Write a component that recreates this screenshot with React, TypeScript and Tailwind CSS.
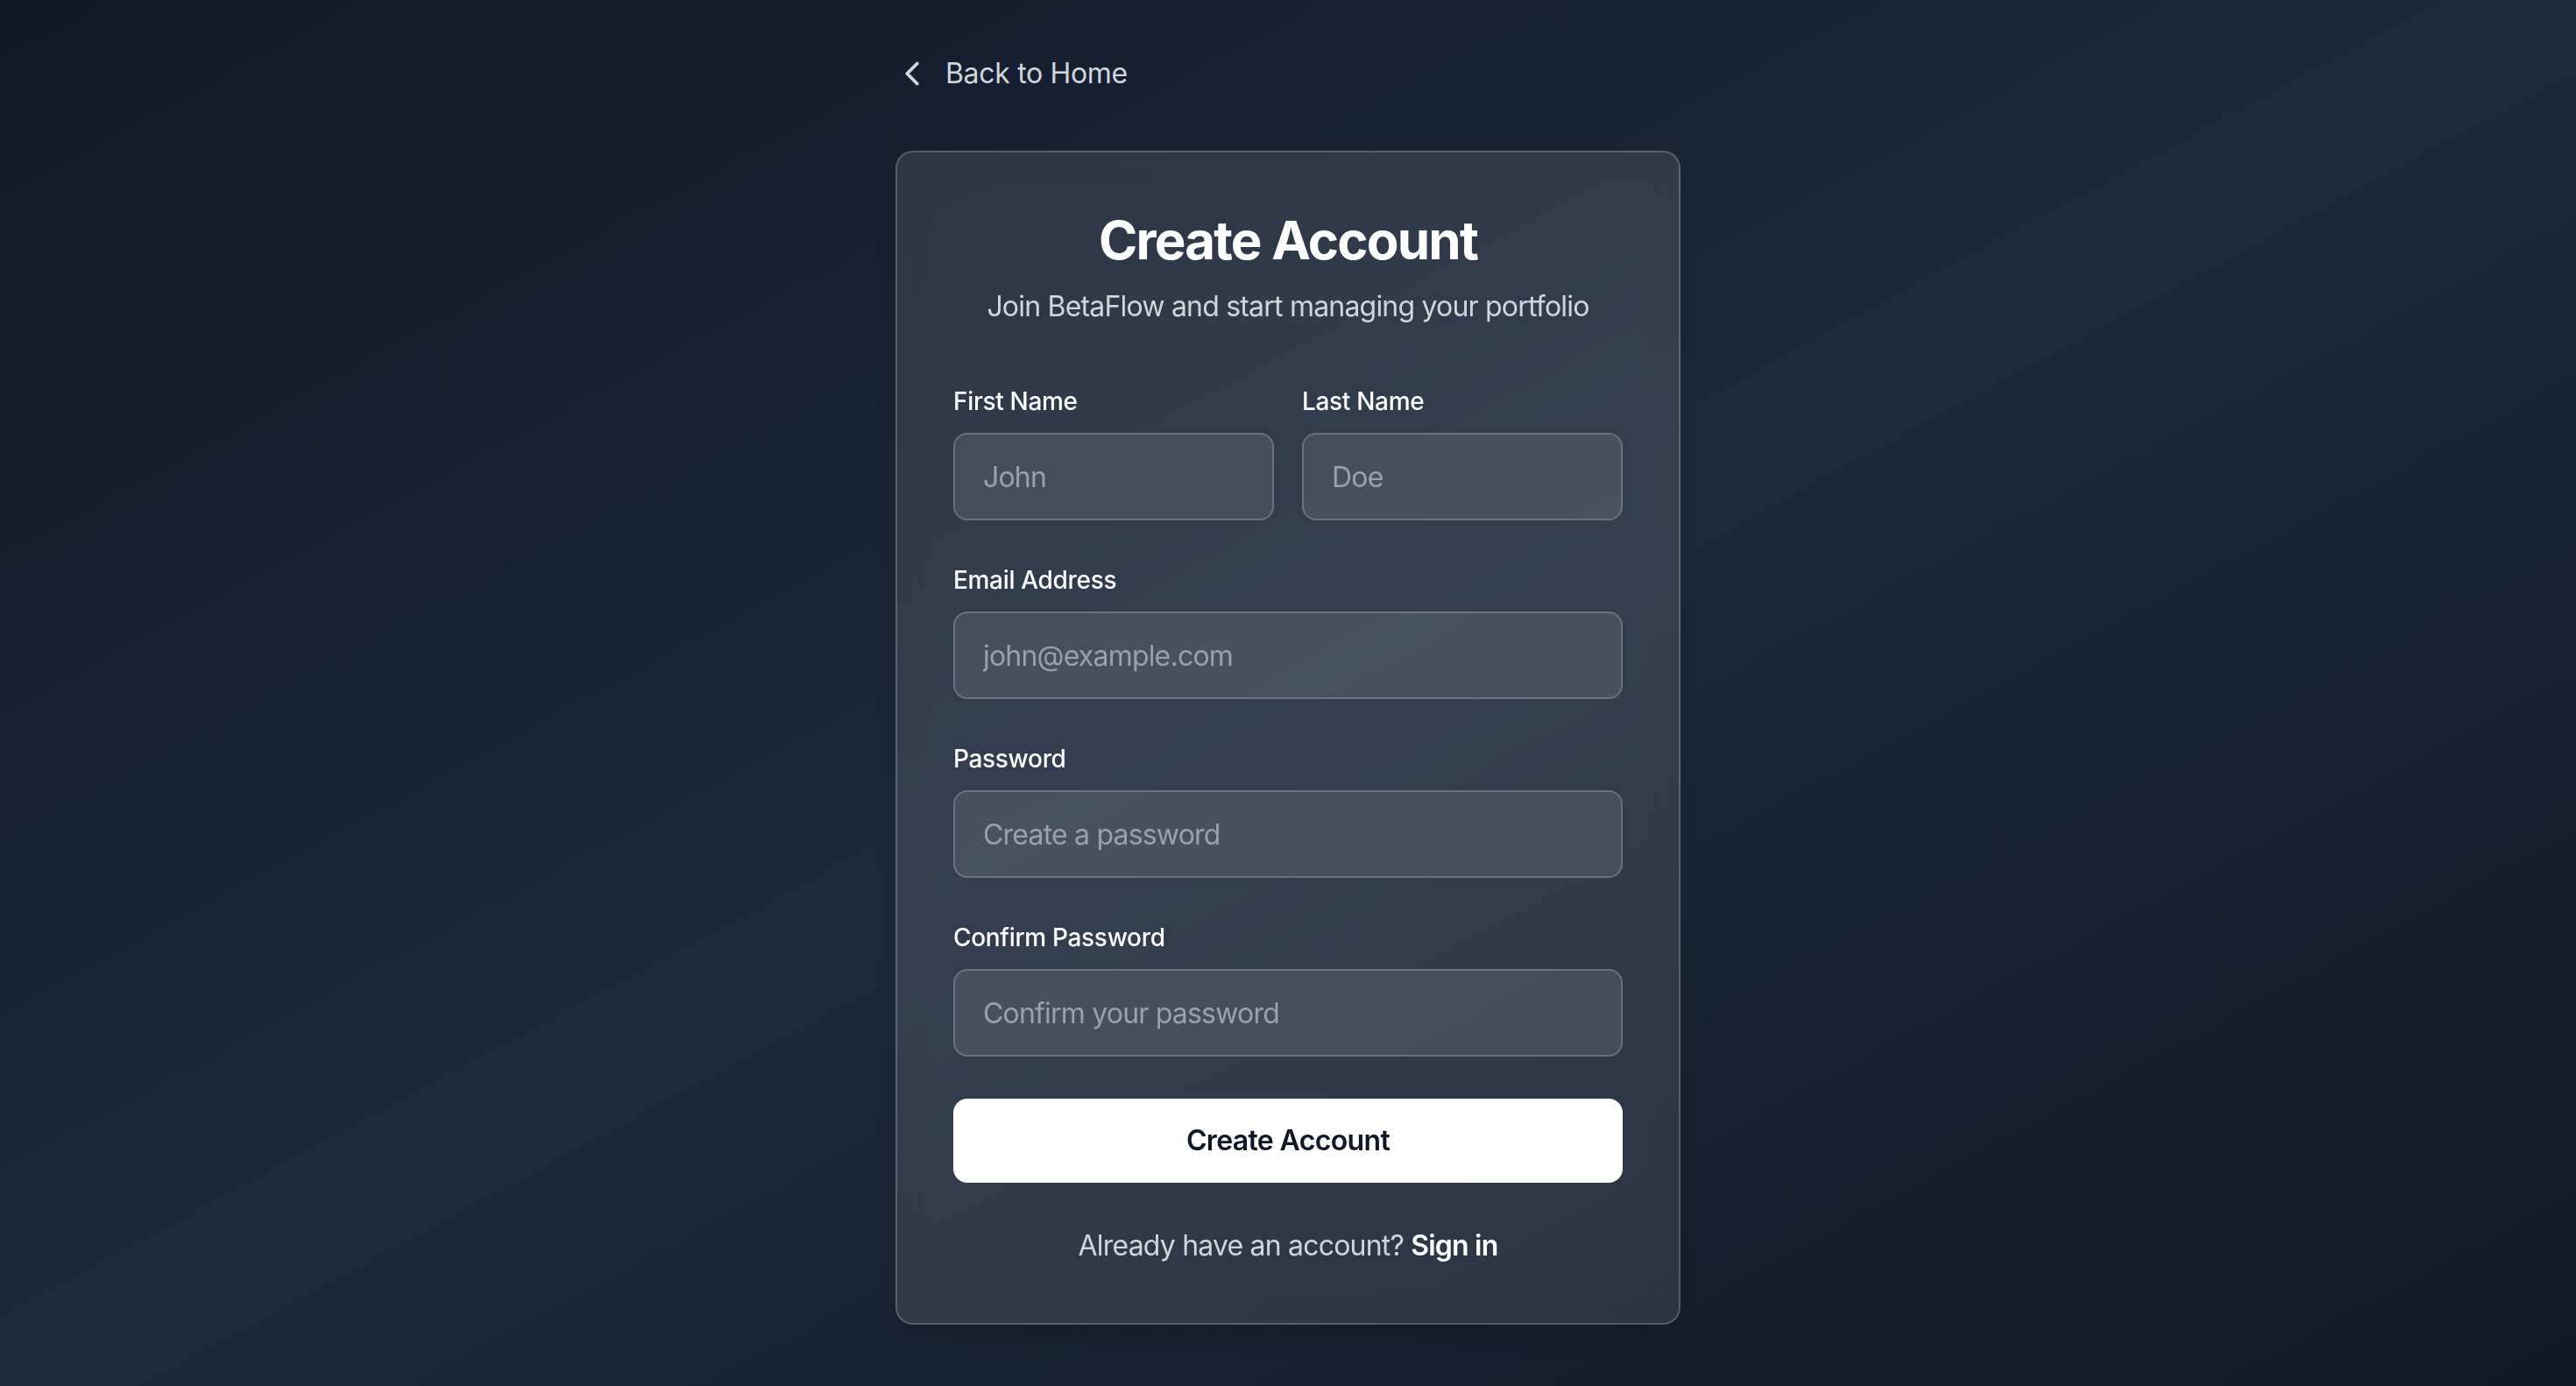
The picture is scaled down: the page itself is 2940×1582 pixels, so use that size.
import { ChevronLeft } from "lucide-react";

const labelClass = "block text-[28px] leading-[40px] font-medium text-white mb-4";
const inputClass =
  "w-full h-[100px] px-8 rounded-2xl bg-white/10 border-2 border-white/20 text-[32px] tracking-[-0.025em] text-white placeholder:text-gray-400 focus:outline-none";

function Field({ label, placeholder, type = "text" }: { label: string; placeholder: string; type?: string }) {
  return (
    <div>
      <label className={labelClass}>{label}</label>
      <input type={type} placeholder={placeholder} className={inputClass} />
    </div>
  );
}

export default function App() {
  return (
    <div
      className="min-h-screen w-full bg-gradient-to-br from-gray-900 via-slate-800 to-gray-900 flex justify-center pt-[60px] pb-[72px] tracking-[-0.02em]"
      style={{ fontFamily: "Inter, 'Noto Sans', sans-serif" }}
    >
      <div className="w-[896px]">
        <a href="#" className="inline-flex items-center text-gray-300 text-[32px] leading-[48px] mb-16">
          <ChevronLeft size={46} strokeWidth={2} className="-ml-1 mr-[15px]" />
          Back to Home
        </a>

        <div className="bg-white/10 backdrop-blur-lg border-2 border-white/20 rounded-[20px] p-16 shadow-xl">
          <div className="text-center mb-16">
            <h1 className="text-[60px] leading-[72px] font-bold tracking-[-0.03em] text-white mb-4">Create Account</h1>
            <p className="text-[32px] leading-[48px] tracking-[-0.025em] text-gray-300">
              Join BetaFlow and start managing your portfolio
            </p>
          </div>

          <form className="flex flex-col gap-12" onSubmit={(e) => e.preventDefault()}>
            <div className="grid grid-cols-2 gap-8">
              <Field label="First Name" placeholder="John" />
              <Field label="Last Name" placeholder="Doe" />
            </div>
            <Field label="Email Address" placeholder="john@example.com" type="email" />
            <Field label="Password" placeholder="Create a password" type="password" />
            <Field label="Confirm Password" placeholder="Confirm your password" type="password" />
            <button
              type="submit"
              className="w-full h-[96px] rounded-2xl bg-white text-gray-900 text-[32px] tracking-[-0.02em] font-semibold hover:bg-gray-100 transition"
            >
              Create Account
            </button>
          </form>

          <p className="text-center mt-12 text-[32px] leading-[48px] tracking-[-0.025em] text-gray-300">
            Already have an account?{" "}
            <a href="#" className="text-white font-semibold hover:underline">
              Sign in
            </a>
          </p>
        </div>
      </div>
    </div>
  );
}
